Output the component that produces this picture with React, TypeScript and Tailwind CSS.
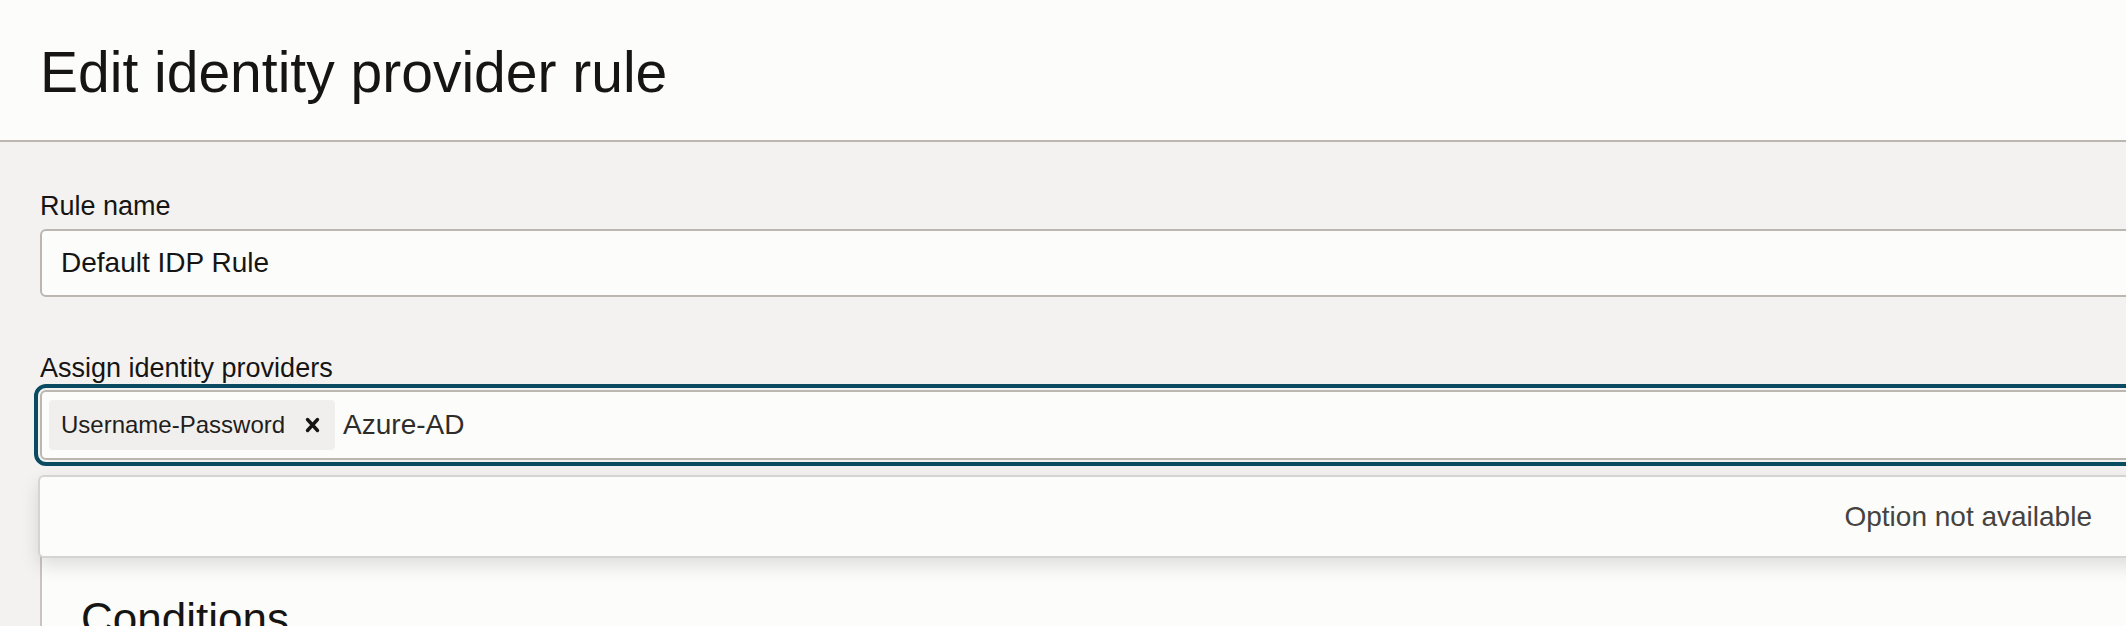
export default function App() {
  return (
    <div className="w-[2126px] h-[626px] overflow-hidden bg-[#f3f2f0] font-['Liberation_Sans',Arial,sans-serif] text-[#161513]">
      <header className="h-[142px] bg-[#fcfcfb] border-b-2 border-[#bcb6b0] pl-10 pt-[39px]">
        <h1 className="text-[57px] leading-[67px] whitespace-nowrap">Edit identity provider rule</h1>
      </header>

      <main className="w-[2150px] pl-10 pt-[48px]">
        <label className="block text-[27px] leading-[32px] mb-[7px]">Rule name</label>
        <div className="h-[68px] flex items-center rounded-md border-2 border-[#bcb6b0] bg-[#fcfcfb] pl-[19px] text-[28px]">
          Default IDP Rule
        </div>

        <label className="block mt-[55px] text-[27px] leading-[32px] mb-[6px] whitespace-nowrap">
          Assign identity providers
        </label>
        <div className="relative">
          <div className="h-[70px] flex items-center rounded-md border-2 border-[#bcb6b0] bg-[#fcfcfb] pl-[7px] outline-4 outline-offset-2 outline-[#0a4b61]">
            <span className="flex items-center h-[50px] rounded-[4px] bg-[#f1efed] pl-[12px] pr-[15px] text-[24px] text-[#1f1e1c]">
              Username-Password
              <svg className="ml-[20px]" width="15" height="16" viewBox="0 0 15 16" fill="none">
                <path d="M2.5 2.5L12.5 13.5M12.5 2.5L2.5 13.5" stroke="#161513" strokeWidth="3.4" strokeLinecap="round" />
              </svg>
            </span>
            <span className="ml-[8px] text-[28px] text-[#2f2d2a]">Azure-AD</span>
          </div>

          {/* listbox popup */}
          <div className="absolute z-10 left-[-2px] top-[85px] w-[2112px] h-[83px] flex items-center justify-end rounded-md border-2 border-[#d6d4d1] bg-[#fcfcfb] pr-[56px] shadow-[0_8px_18px_rgba(0,0,0,0.12)]">
            <span className="text-[28px] text-[#45433f]">Option not available</span>
          </div>
        </div>

        <section className="mt-[16px] h-[200px] rounded-lg border-2 border-[#c9c4bf] bg-[#fcfcfb] pl-[39px] pt-[114px]">
          <h2 className="text-[44px] leading-[53px]">Conditions</h2>
        </section>
      </main>
    </div>
  );
}
